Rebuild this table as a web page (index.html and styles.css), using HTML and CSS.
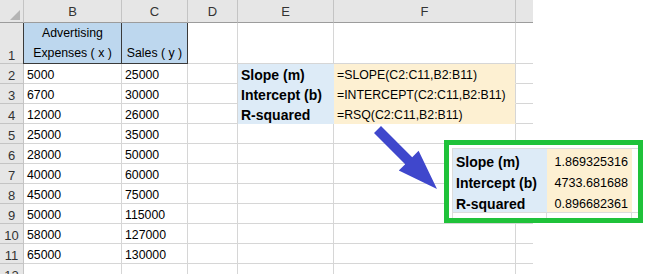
FILE: index.html
```html
<!DOCTYPE html>
<html lang="en">
<head>
    <meta charset="UTF-8">
    <meta name="viewport" content="width=device-width, initial-scale=1.0">
    <title>Linear regression</title>
    <link rel="stylesheet" href="styles.css">
</head>
<body>

<div class="sheet">
    <!-- cabecera de columnas -->
    <div class="cell corner"><span class="tri"></span></div>
    <div class="cell col-head">B</div>
    <div class="cell col-head">C</div>
    <div class="cell col-head">D</div>
    <div class="cell col-head">E</div>
    <div class="cell col-head">F</div>
    <div class="cell col-head last"></div>

    <div class="cell row-head">1</div>
    <div class="cell head-blue first">Advertising Expenses ( x )</div>
    <div class="cell head-blue">Sales ( y )</div>
    <div class="cell"></div>
    <div class="cell"></div>
    <div class="cell"></div>
    <div class="cell last"></div>

    <div class="cell row-head">2</div>
    <div class="cell">5000</div>
    <div class="cell">25000</div>
    <div class="cell"></div>
    <div class="cell label">Slope (m)</div>
    <div class="cell formula">=SLOPE(C2:C11,B2:B11)</div>
    <div class="cell last"></div>

    <div class="cell row-head">3</div>
    <div class="cell">6700</div>
    <div class="cell">30000</div>
    <div class="cell"></div>
    <div class="cell label">Intercept (b)</div>
    <div class="cell formula">=INTERCEPT(C2:C11,B2:B11)</div>
    <div class="cell last"></div>

    <div class="cell row-head">4</div>
    <div class="cell">12000</div>
    <div class="cell">26000</div>
    <div class="cell"></div>
    <div class="cell label">R-squared</div>
    <div class="cell formula">=RSQ(C2:C11,B2:B11)</div>
    <div class="cell last"></div>

    <div class="cell row-head">5</div>
    <div class="cell">25000</div>
    <div class="cell">35000</div>
    <div class="cell"></div>
    <div class="cell"></div>
    <div class="cell"></div>
    <div class="cell last"></div>

    <div class="cell row-head">6</div>
    <div class="cell">28000</div>
    <div class="cell">50000</div>
    <div class="cell"></div>
    <div class="cell"></div>
    <div class="cell"></div>
    <div class="cell last"></div>

    <div class="cell row-head">7</div>
    <div class="cell">40000</div>
    <div class="cell">60000</div>
    <div class="cell"></div>
    <div class="cell"></div>
    <div class="cell"></div>
    <div class="cell last"></div>

    <div class="cell row-head">8</div>
    <div class="cell">45000</div>
    <div class="cell">75000</div>
    <div class="cell"></div>
    <div class="cell"></div>
    <div class="cell"></div>
    <div class="cell last"></div>

    <div class="cell row-head">9</div>
    <div class="cell">50000</div>
    <div class="cell">115000</div>
    <div class="cell"></div>
    <div class="cell"></div>
    <div class="cell"></div>
    <div class="cell last"></div>

    <div class="cell row-head">10</div>
    <div class="cell">58000</div>
    <div class="cell">127000</div>
    <div class="cell"></div>
    <div class="cell"></div>
    <div class="cell"></div>
    <div class="cell last"></div>

    <div class="cell row-head">11</div>
    <div class="cell">65000</div>
    <div class="cell">130000</div>
    <div class="cell"></div>
    <div class="cell"></div>
    <div class="cell"></div>
    <div class="cell last"></div>

    <div class="cell row-head">12</div>
    <div class="cell"></div>
    <div class="cell"></div>
    <div class="cell"></div>
    <div class="cell"></div>
    <div class="cell"></div>
    <div class="cell last"></div>

    <!-- flecha hacia los resultados -->
    <svg class="arrow" width="90" height="85" viewBox="0 0 90 85">
        <polygon points="21,11 52.2,42.2 58.6,35.8 77,74 38.8,55.6 45.2,49.2 14,18" fill="#3f47cc"/>
    </svg>

    <!-- resultados calculados -->
    <div class="result">
        <div class="snip">
            <div class="snip-grid">
                <div class="s-label">Slope (m)</div>
                <div class="s-value">1.869325316</div>
                <div class="s-blank"></div>
                <div class="s-label">Intercept (b)</div>
                <div class="s-value">4733.681688</div>
                <div class="s-blank"></div>
                <div class="s-label">R-squared</div>
                <div class="s-value">0.896682361</div>
                <div class="s-blank"></div>
                <div class="s-foot"></div>
                <div class="s-foot"></div>
                <div class="s-foot"></div>
            </div>
        </div>
    </div>
</div>

</body>
</html>
```

FILE: styles.css
```css
body {
    margin: 0;
    padding: 0;
    background-color: #fff;
    font-family: "Liberation Sans", Arial, sans-serif;
    font-size: 12.3px;
    color: #000;
}
.sheet {
    position: relative;
    width: 533px;
    display: grid;
    grid-template-columns: 24px 98px 66px 50px 96px 182px 17px;
    grid-template-rows: 23px 41px;
    grid-auto-rows: 20px;
}
.cell {
    box-sizing: border-box;
    border-right: 1px solid #d6d6d6;
    border-bottom: 1px solid #d6d6d6;
    padding: 0 3px;
    line-height: 15px;
    display: flex;
    align-items: flex-end;
    white-space: nowrap;
    overflow: hidden;
}
.cell.last {
    border-right: none;
}
.corner,
.col-head,
.row-head {
    background-color: #e6e6e6;
    border-right-color: #c4c4c4;
    color: #333;
}
.corner,
.col-head {
    border-bottom-color: #9c9c9c;
}
.col-head {
    justify-content: center;
    align-items: center;
    font-size: 13px;
}
.row-head {
    justify-content: center;
    padding: 0;
    border-bottom-color: #c4c4c4;
    font-size: 13px;
}
.corner {
    justify-content: flex-end;
    padding: 0 3px 2px 0;
}
.corner .tri {
    width: 0;
    height: 0;
    border-left: 10px solid transparent;
    border-bottom: 10px solid #b4b4b4;
}
.head-blue {
    background-color: #bdd7ee;
    border-right-color: #3a3a3a;
    border-bottom-color: #3a3a3a;
    justify-content: center;
    text-align: center;
    white-space: normal;
    line-height: 20px;
    padding: 1px 2px 0;
}
.head-blue.first {
    box-shadow: -1px 0 0 #3a3a3a;
}
.label {
    background-color: #ddebf7;
    border-right-color: #ddebf7;
    border-bottom-color: #ddebf7;
    font-weight: bold;
    font-size: 14px;
}
.formula {
    background-color: #fdf0d2;
    border-bottom-color: #fdf0d2;
}
.arrow {
    position: absolute;
    left: 360px;
    top: 115px;
}
.result {
    position: absolute;
    left: 444px;
    top: 140px;
    width: 199px;
    height: 83px;
    box-sizing: border-box;
    border: 5px solid #1fc23a;
    background-color: #fff;
}
.snip {
    height: 100%;
    box-sizing: border-box;
    padding: 3px 0 0 3px;
}
.snip-grid {
    height: 100%;
    box-sizing: border-box;
    border-top: 1px solid #dcdcdc;
    border-left: 1px solid #dcdcdc;
    display: grid;
    grid-template-columns: 94px 85px 1fr;
    grid-template-rows: 21px 21px 21px 1fr;
}
.s-label,
.s-value {
    display: flex;
    align-items: flex-end;
    line-height: 16px;
    white-space: nowrap;
}
.s-label {
    background-color: #ddebf7;
    padding-left: 3px;
    font-weight: bold;
    font-size: 14px;
}
.s-value {
    background-color: #fdf0d2;
    justify-content: flex-end;
    padding-right: 4px;
    font-size: 12.6px;
}
.s-foot {
    border-right: 1px solid #dcdcdc;
    border-top: 1px solid #dcdcdc;
}
.s-foot:last-child {
    border-right: none;
}
```
